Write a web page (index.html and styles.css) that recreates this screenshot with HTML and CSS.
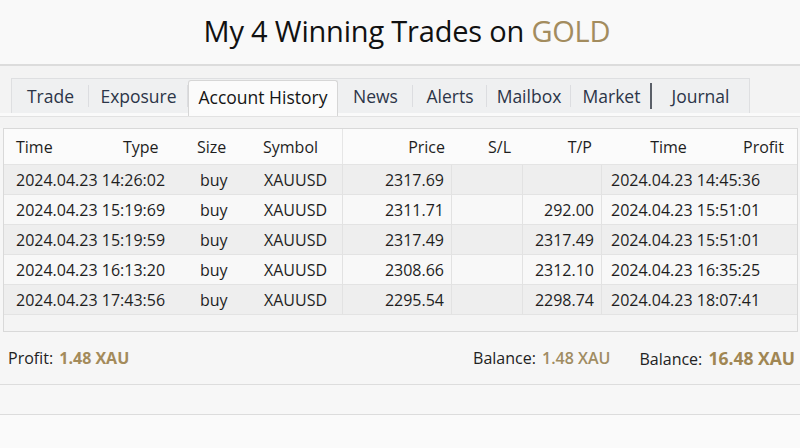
FILE: index.html
```html
<!DOCTYPE html>
<html lang="en">
<head>
<meta charset="utf-8">
<title>My 4 Winning Trades on GOLD</title>
<link rel="stylesheet" href="styles.css">
</head>
<body>
<header class="title-bar">
  <h1 class="title">My 4 Winning Trades on <span class="gold">GOLD</span></h1>
</header>

<nav class="tabs-area">
  <div class="tabs">
    <div class="tab">Trade</div>
    <div class="tab">Exposure</div>
    <div class="tab tab-active">Account History</div>
    <div class="tab">News</div>
    <div class="tab">Alerts</div>
    <div class="tab">Mailbox</div>
    <div class="tab tab-strong-sep">Market</div>
    <div class="tab tab-last">Journal</div>
  </div>
</nav>
<div class="under-tabs"></div>

<section class="panel">
  <div class="head-row">
    <div class="hc hc-time">Time</div>
    <div class="hc hc-type">Type</div>
    <div class="hc hc-size">Size</div>
    <div class="hc hc-symbol">Symbol</div>
    <div class="hc hc-price">Price</div>
    <div class="hc hc-sl">S/L</div>
    <div class="hc hc-tp">T/P</div>
    <div class="hc hc-ctime">Time</div>
    <div class="hc hc-profit">Profit</div>
  </div>

  <div class="row odd">
    <div class="c c-time">2024.04.23 14:26:02</div>
    <div class="c c-type">buy</div>
    <div class="c c-symbol">XAUUSD</div>
    <div class="c c-price">2317.69</div>
    <div class="c c-sl"></div>
    <div class="c c-tp"></div>
    <div class="c c-ctime">2024.04.23 14:45:36</div>
  </div>
  <div class="row">
    <div class="c c-time">2024.04.23 15:19:69</div>
    <div class="c c-type">buy</div>
    <div class="c c-symbol">XAUUSD</div>
    <div class="c c-price">2311.71</div>
    <div class="c c-sl"></div>
    <div class="c c-tp">292.00</div>
    <div class="c c-ctime">2024.04.23 15:51:01</div>
  </div>
  <div class="row odd">
    <div class="c c-time">2024.04.23 15:19:59</div>
    <div class="c c-type">buy</div>
    <div class="c c-symbol">XAUUSD</div>
    <div class="c c-price">2317.49</div>
    <div class="c c-sl"></div>
    <div class="c c-tp">2317.49</div>
    <div class="c c-ctime">2024.04.23 15:51:01</div>
  </div>
  <div class="row">
    <div class="c c-time">2024.04.23 16:13:20</div>
    <div class="c c-type">buy</div>
    <div class="c c-symbol">XAUUSD</div>
    <div class="c c-price">2308.66</div>
    <div class="c c-sl"></div>
    <div class="c c-tp">2312.10</div>
    <div class="c c-ctime">2024.04.23 16:35:25</div>
  </div>
  <div class="row odd">
    <div class="c c-time">2024.04.23 17:43:56</div>
    <div class="c c-type">buy</div>
    <div class="c c-symbol">XAUUSD</div>
    <div class="c c-price">2295.54</div>
    <div class="c c-sl"></div>
    <div class="c c-tp">2298.74</div>
    <div class="c c-ctime">2024.04.23 18:07:41</div>
  </div>
  <div class="filler"></div>
</section>

<footer class="summary">
  <div class="sum-profit">Profit: <span class="val-bold">1.48 XAU</span></div>
  <div class="sum-right">
    <div class="sum-item">Balance: <span class="val">1.48 XAU</span></div>
    <div class="sum-item">Balance: <span class="val-big">16.48 XAU</span></div>
  </div>
</footer>
<div class="band"></div>
<div class="bottom"></div>
</body>
</html>
```

FILE: styles.css
```css
* { box-sizing: border-box; }

html, body {
  margin: 0;
  padding: 0;
}

body {
  width: 800px;
  height: 448px;
  overflow: hidden;
  background: #f6f6f6;
  font-family: "Open Sans", "Noto Sans", "DejaVu Sans", sans-serif;
  color: #222;
}

.title-bar {
  height: 66px;
  background: #f9f9f9;
  border-bottom: 2px solid #dcdcdc;
  display: flex;
  justify-content: center;
  align-items: center;
  padding: 0 0 4px 14px;
}

.title {
  margin: 0;
  font-size: 29px;
  font-weight: 400;
  letter-spacing: -0.2px;
  color: #111;
}

.gold { color: #a38c5e; }

.tabs-area {
  background: #f3f3f3;
  padding: 12px 0 0 11px;
}

.tabs {
  display: grid;
  grid-template-columns: 77px 99px 150px 75px 74px 84px 81px 97px;
  height: 35px;
  width: max-content;
  background: #eff0f1;
  border: 1px solid #dedfe1;
  border-bottom: none;
}

.tab {
  display: flex;
  align-items: center;
  justify-content: center;
  font-size: 17.5px;
  color: #2c3548;
  position: relative;
}

.tab::after {
  content: "";
  position: absolute;
  right: 0;
  top: 6px;
  bottom: 6px;
  width: 1px;
  background: #dcdde0;
}

.tab-last::after { display: none; }

.tab-strong-sep::after {
  width: 2px;
  top: 4px;
  bottom: 4px;
  background: #5a5f68;
}

.tab-active {
  background: #fbfbfb;
  color: #151515;
  margin-top: 1px;
  margin-bottom: -3px;
  padding-bottom: 3px;
  border: 1px solid #d6d6d6;
  border-bottom: none;
  border-radius: 3px 3px 0 0;
  z-index: 1;
}

.tab-active::after { display: none; }

.under-tabs {
  height: 15px;
  background: #f3f3f3;
  border-top: 3px solid #fafafa;
  box-shadow: inset 0 1px 0 #e2e2e2;
}

.panel {
  margin-left: 3px;
  width: 795px;
  border: 1px solid #d9d9d9;
  background: #f3f3f3;
  font-size: 16px;
  color: #1e1e1e;
}

.head-row {
  display: grid;
  grid-template-columns: 106px 80px 65px 88px 109px 71px 79px 133px 1fr;
  height: 36px;
  align-items: center;
  background: #fbfbfb;
  border-bottom: 1px solid #e4e4e4;
}

.hc { height: 100%; display: flex; align-items: center; }
.hc-time { padding-left: 12px; }
.hc-type { padding-left: 13px; }
.hc-size { padding-left: 7px; }
.hc-symbol { padding-left: 8px; border-right: 1px solid #e6e6e6; }
.hc-price { justify-content: flex-end; padding-right: 7px; }
.hc-sl { padding-left: 36px; }
.hc-tp { justify-content: flex-end; padding-right: 10px; }
.hc-ctime { justify-content: center; }
.hc-profit { justify-content: flex-end; padding-right: 13px; }

.row {
  display: grid;
  grid-template-columns: 186px 65px 88px 109px 71px 79px 1fr;
  height: 30px;
  background: #f8f8f8;
  border-bottom: 1px solid #e3e3e3;
}

.row.odd { background: #eeeeee; }

.c {
  display: flex;
  align-items: center;
  white-space: nowrap;
}

.c-time { padding-left: 12px; }
.c-type { padding-left: 10px; }
.c-symbol { padding-left: 9px; border-right: 1px solid #e2e2e2; }
.c-price { justify-content: flex-end; padding-right: 7px; border-right: 1px solid #e2e2e2; }
.c-sl { border-right: 1px solid #e2e2e2; }
.c-tp { justify-content: flex-end; padding-right: 7px; border-right: 1px solid #e2e2e2; }
.c-ctime { padding-left: 9px; }

.filler {
  height: 16px;
  background: #f4f4f4;
}

.summary {
  height: 53px;
  display: flex;
  align-items: center;
  justify-content: space-between;
  padding: 0 5px 0 8px;
  background: #f6f6f6;
  border-bottom: 1px solid #dddddd;
  font-size: 16px;
  color: #222;
}

.sum-right {
  display: flex;
  gap: 29px;
  align-items: center;
}

.val-bold {
  font-weight: 700;
  color: #a48b5b;
  margin-left: 2px;
}

.val {
  font-weight: 600;
  color: #a08c62;
  margin-left: 2px;
}

.val-big {
  font-weight: 700;
  font-size: 17.5px;
  color: #a08653;
  margin-left: 2px;
}

.band {
  height: 30px;
  background: #f7f7f7;
  border-bottom: 1px solid #dcdcdc;
}

.bottom {
  height: 40px;
  background: #fafafa;
}
```
